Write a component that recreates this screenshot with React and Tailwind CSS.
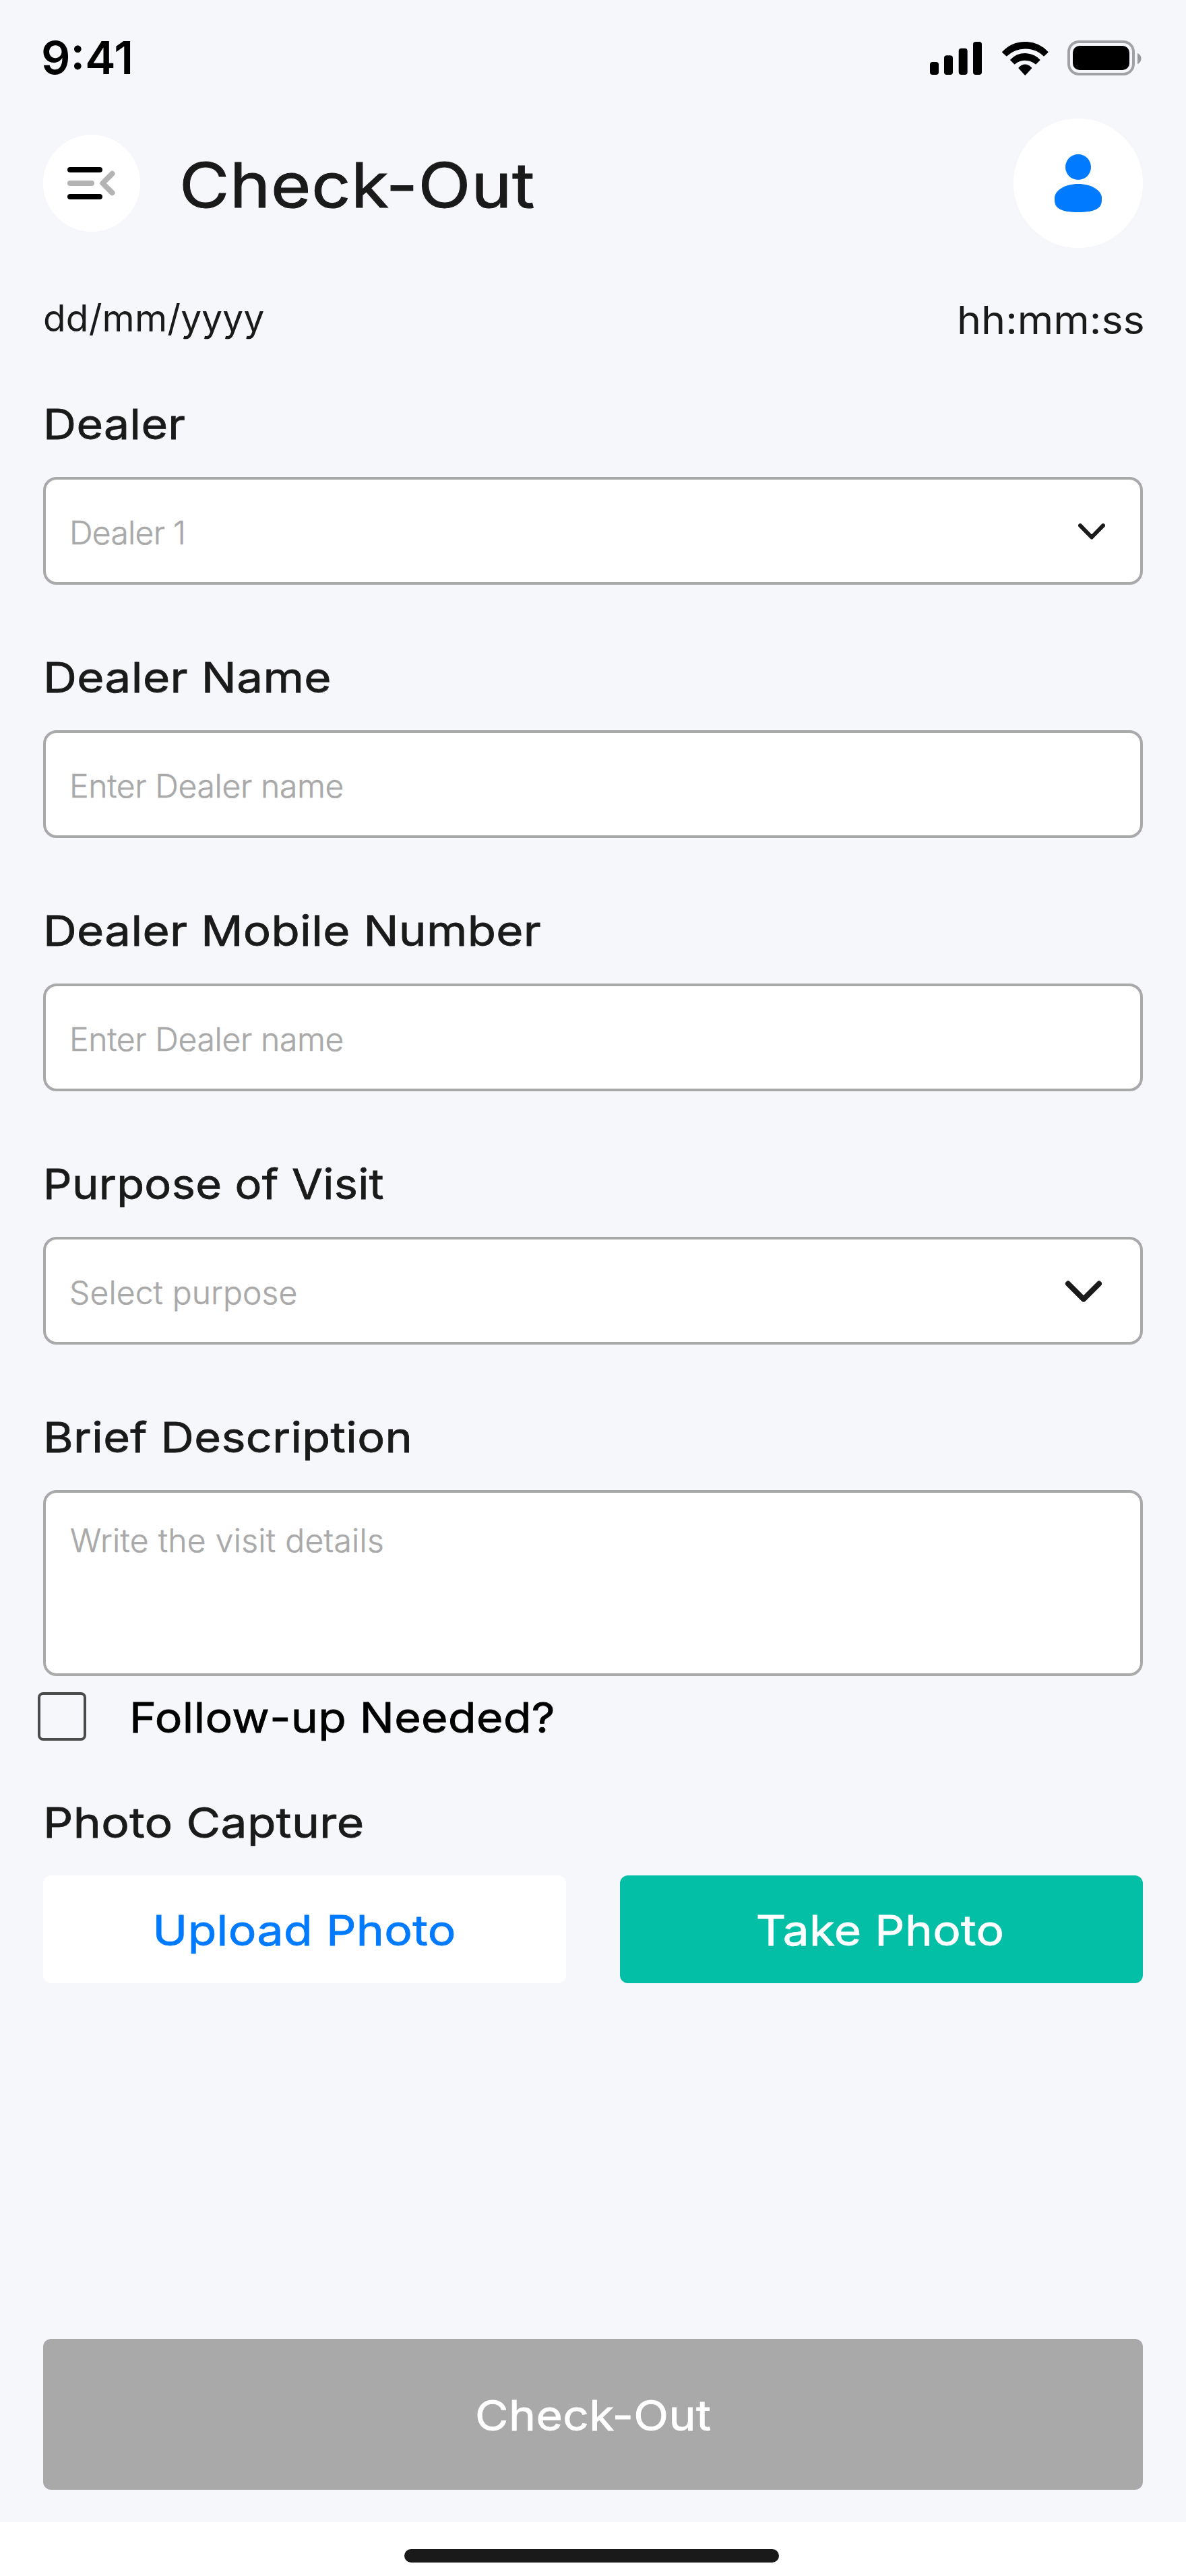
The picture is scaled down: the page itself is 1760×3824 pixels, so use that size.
import React from "react";

const labelText =
  "inline-block whitespace-nowrap text-[62px] leading-[80px] font-normal tracking-[0.33px] [-webkit-text-stroke:0.8px_currentColor]";

const hintText =
  "text-[48px] leading-[64px] font-light whitespace-nowrap text-[#a9a9a9] [-webkit-text-stroke:0.5px_currentColor]";

function SignalIcon() {
  return (
    <svg width="77" height="52" viewBox="0 0 77 52" fill="#000">
      <rect x="0" y="32" width="13" height="19" rx="4" />
      <rect x="21" y="22.3" width="13" height="28.7" rx="4" />
      <rect x="42.7" y="11.8" width="13" height="39.2" rx="4" />
      <rect x="64" y="2" width="13" height="49" rx="4" />
    </svg>
  );
}

function WifiIcon() {
  return (
    <svg
      width="69"
      height="52"
      viewBox="0 0 69 52"
      fill="#000"
      stroke="#000"
      strokeWidth="1.6"
      strokeLinejoin="round"
    >
      <path d="M0.9 17A45.5 45.5 0 0 1 67.7 17L62 22.3A40.5 40.5 0 0 0 6.8 22.3Z" transform="translate(0 .3)" />
      <path d="M12.9 29A29.6 29.6 0 0 1 55.7 29L50 34.6A24.5 24.5 0 0 0 18.7 34.6Z" />
      <path d="M25.2 41C30.5 34.6 38.1 34.6 43.4 41L34.3 50.9Z" />
    </svg>
  );
}

function BatteryIcon() {
  return (
    <svg width="110" height="52" viewBox="0 0 110 52">
      <rect x="2" y="2" width="96" height="48" rx="15" fill="none" stroke="#a2a2a5" strokeWidth="4" />
      <rect x="8" y="8" width="84" height="36" rx="10" fill="#000" />
      <path d="M104 19C107.300 20.400 109.500 23.500 109.500 27S107.300 33.600 104 35Z" fill="#98989a" />
    </svg>
  );
}

function MenuIcon() {
  return (
    <svg width="72" height="48" viewBox="0 0 72 48">
      <rect x="0" y="0" width="52" height="8" rx="4" fill="#000" />
      <rect x="0" y="20" width="40" height="8" rx="4" fill="#b3b3b3" />
      <rect x="0" y="40" width="52" height="8" rx="4" fill="#000" />
      <path
        d="M66.500 9.800L52.300 24L66.500 38.200"
        fill="none"
        stroke="#b3b3b3"
        strokeWidth="8"
        strokeLinecap="round"
        strokeLinejoin="round"
      />
    </svg>
  );
}

function UserIcon() {
  return (
    <svg width="70" height="86" viewBox="0 0 70 86" fill="#007aff">
      <circle cx="35" cy="19" r="19" />
      <path d="M35 44C54 44 70 53.500 70 65V68C70 80 61 86 35 86S0 80 0 68V65C0 53.500 16 44 35 44Z" />
    </svg>
  );
}

function ChevronSmall() {
  return (
    <svg width="40" height="24" viewBox="0 0 40 24" fill="none" stroke="#1a1a1a" strokeWidth="6" strokeLinecap="round" strokeLinejoin="round">
      <path d="M3 3.200L20 20.500L37 3.200" />
    </svg>
  );
}

function ChevronLarge() {
  return (
    <svg width="54" height="32" viewBox="0 0 54 32" fill="none" stroke="#1a1a1a" strokeWidth="8" strokeLinecap="round" strokeLinejoin="round">
      <path d="M4 4.600L27 27.600L50 4.600" />
    </svg>
  );
}

function Field({ label, labelClass, placeholder, placeholderClass, children }) {
  return (
    <div className="mb-[98px] flex flex-col">
      <div className="h-[80px]">
        <span className={`${labelText} origin-left ${labelClass}`}>{label}</span>
      </div>
      <div className="mt-[38px] flex h-[160px] items-center justify-between rounded-[20px] border-4 border-[#a9a9a9] bg-white pl-[35px]">
        <span className={`${hintText} pt-[5px] ${placeholderClass}`}>{placeholder}</span>
        {children}
      </div>
    </div>
  );
}

export default function App() {
  return (
    <div className="flex h-[3824px] w-[1760px] flex-col overflow-hidden bg-[#f6f7fb] font-['Inter',sans-serif] text-[#1a1a1a]">
      {/* Status bar */}
      <div className="flex h-[176px] items-start justify-between pt-[60px] pr-[66px] pl-[61px]">
        <span className="text-[68px] leading-[51px] font-semibold text-black">9:41</span>
        <div className="flex items-start">
          <SignalIcon />
          <div className="ml-[30px]">
            <WifiIcon />
          </div>
          <div className="ml-[28px]">
            <BatteryIcon />
          </div>
        </div>
      </div>

      {/* Header */}
      <header className="flex h-[192px] items-center px-16">
        <button className="flex size-[144px] items-center rounded-full bg-white pl-[36px]">
          <MenuIcon />
        </button>
        <h1 className="ml-[58px] origin-left scale-x-[1.102] pt-[4px] text-[92.5px] leading-[112px] font-normal tracking-[0.6px] whitespace-nowrap [-webkit-text-stroke:1.1px_currentColor]">
          Check-Out
        </h1>
        <button className="ml-auto flex size-[192px] items-center justify-center rounded-full bg-white">
          <UserIcon />
        </button>
      </header>

      {/* Date and time */}
      <div className="flex h-[221px] justify-between px-16 pt-[72px]">
        <span className="text-[55px] leading-[64px] tracking-[0.15px]">dd/mm/yyyy</span>
        <span className="-mr-[2.500px] origin-right scale-x-[1.053] pt-[3px] text-[58px] leading-[64px]">hh:mm:ss</span>
      </div>

      {/* Form */}
      <main className="flex flex-1 flex-col px-16 pt-px">
        <Field label="Dealer" labelClass="scale-x-[1.096]" placeholder="Dealer 1" placeholderClass="tracking-[-0.7px]">
          <div className="mr-[52px] pt-0.5">
            <ChevronSmall />
          </div>
        </Field>
        <Field label="Dealer Name" labelClass="scale-x-[1.115]" placeholder="Enter Dealer name" placeholderClass="tracking-[-0.33px]" />
        <Field label="Dealer Mobile Number" labelClass="scale-x-[1.112]" placeholder="Enter Dealer name" placeholderClass="tracking-[-0.33px]" />
        <Field label="Purpose of Visit" labelClass="scale-x-[1.075]" placeholder="Select purpose" placeholderClass="tracking-[0.12px]">
          <div className="mr-[57px] pt-px">
            <ChevronLarge />
          </div>
        </Field>

        <div className="h-[80px]">
          <span className={`${labelText} origin-left scale-x-[1.102]`}>Brief Description</span>
        </div>
        <div className="mt-[38px] h-[276px] rounded-[20px] border-4 border-[#a9a9a9] bg-white pt-[39px] pl-[36px]">
          <span className={`${hintText} block tracking-[0.29px]`}>Write the visit details</span>
        </div>

        <label className="mt-[24px] -ml-2 flex h-[72px] items-center">
          <span className="size-[72px] rounded-[8px] border-4 border-[#4a4a4a]" />
          <span className={`${labelText} ml-[64px] origin-left scale-x-[1.095] pt-[4px] text-black`}>
            Follow-up Needed?
          </span>
        </label>

        <div className="mt-[82px] h-[80px]">
          <span className={`${labelText} origin-left scale-x-[1.12]`}>Photo Capture</span>
        </div>
        <div className="mt-[38px] grid grid-cols-2 gap-[80px]">
          <button className="flex h-[160px] items-center justify-center rounded-[12px] bg-white pt-[3px] text-[#007aff]">
            <span className={`${labelText} scale-x-[1.122]`}>Upload Photo</span>
          </button>
          <button className="flex h-[160px] items-center justify-center rounded-[12px] bg-[#02bfa6] pt-[3px] pr-[4px] text-white">
            <span className={`${labelText} scale-x-[1.116]`}>Take Photo</span>
          </button>
        </div>

        <button className="mt-auto mb-[48px] flex h-[224px] items-center justify-center rounded-[12px] bg-[#a9a9a9] pt-[3px] text-white">
          <span className={`${labelText} scale-x-[1.093]`}>Check-Out</span>
        </button>
      </main>

      {/* Home indicator */}
      <div className="h-[80px] bg-white pt-[40px]">
        <div className="ml-[600px] h-[20px] w-[556px] rounded-full bg-[#1a1a1a]" />
      </div>
    </div>
  );
}
